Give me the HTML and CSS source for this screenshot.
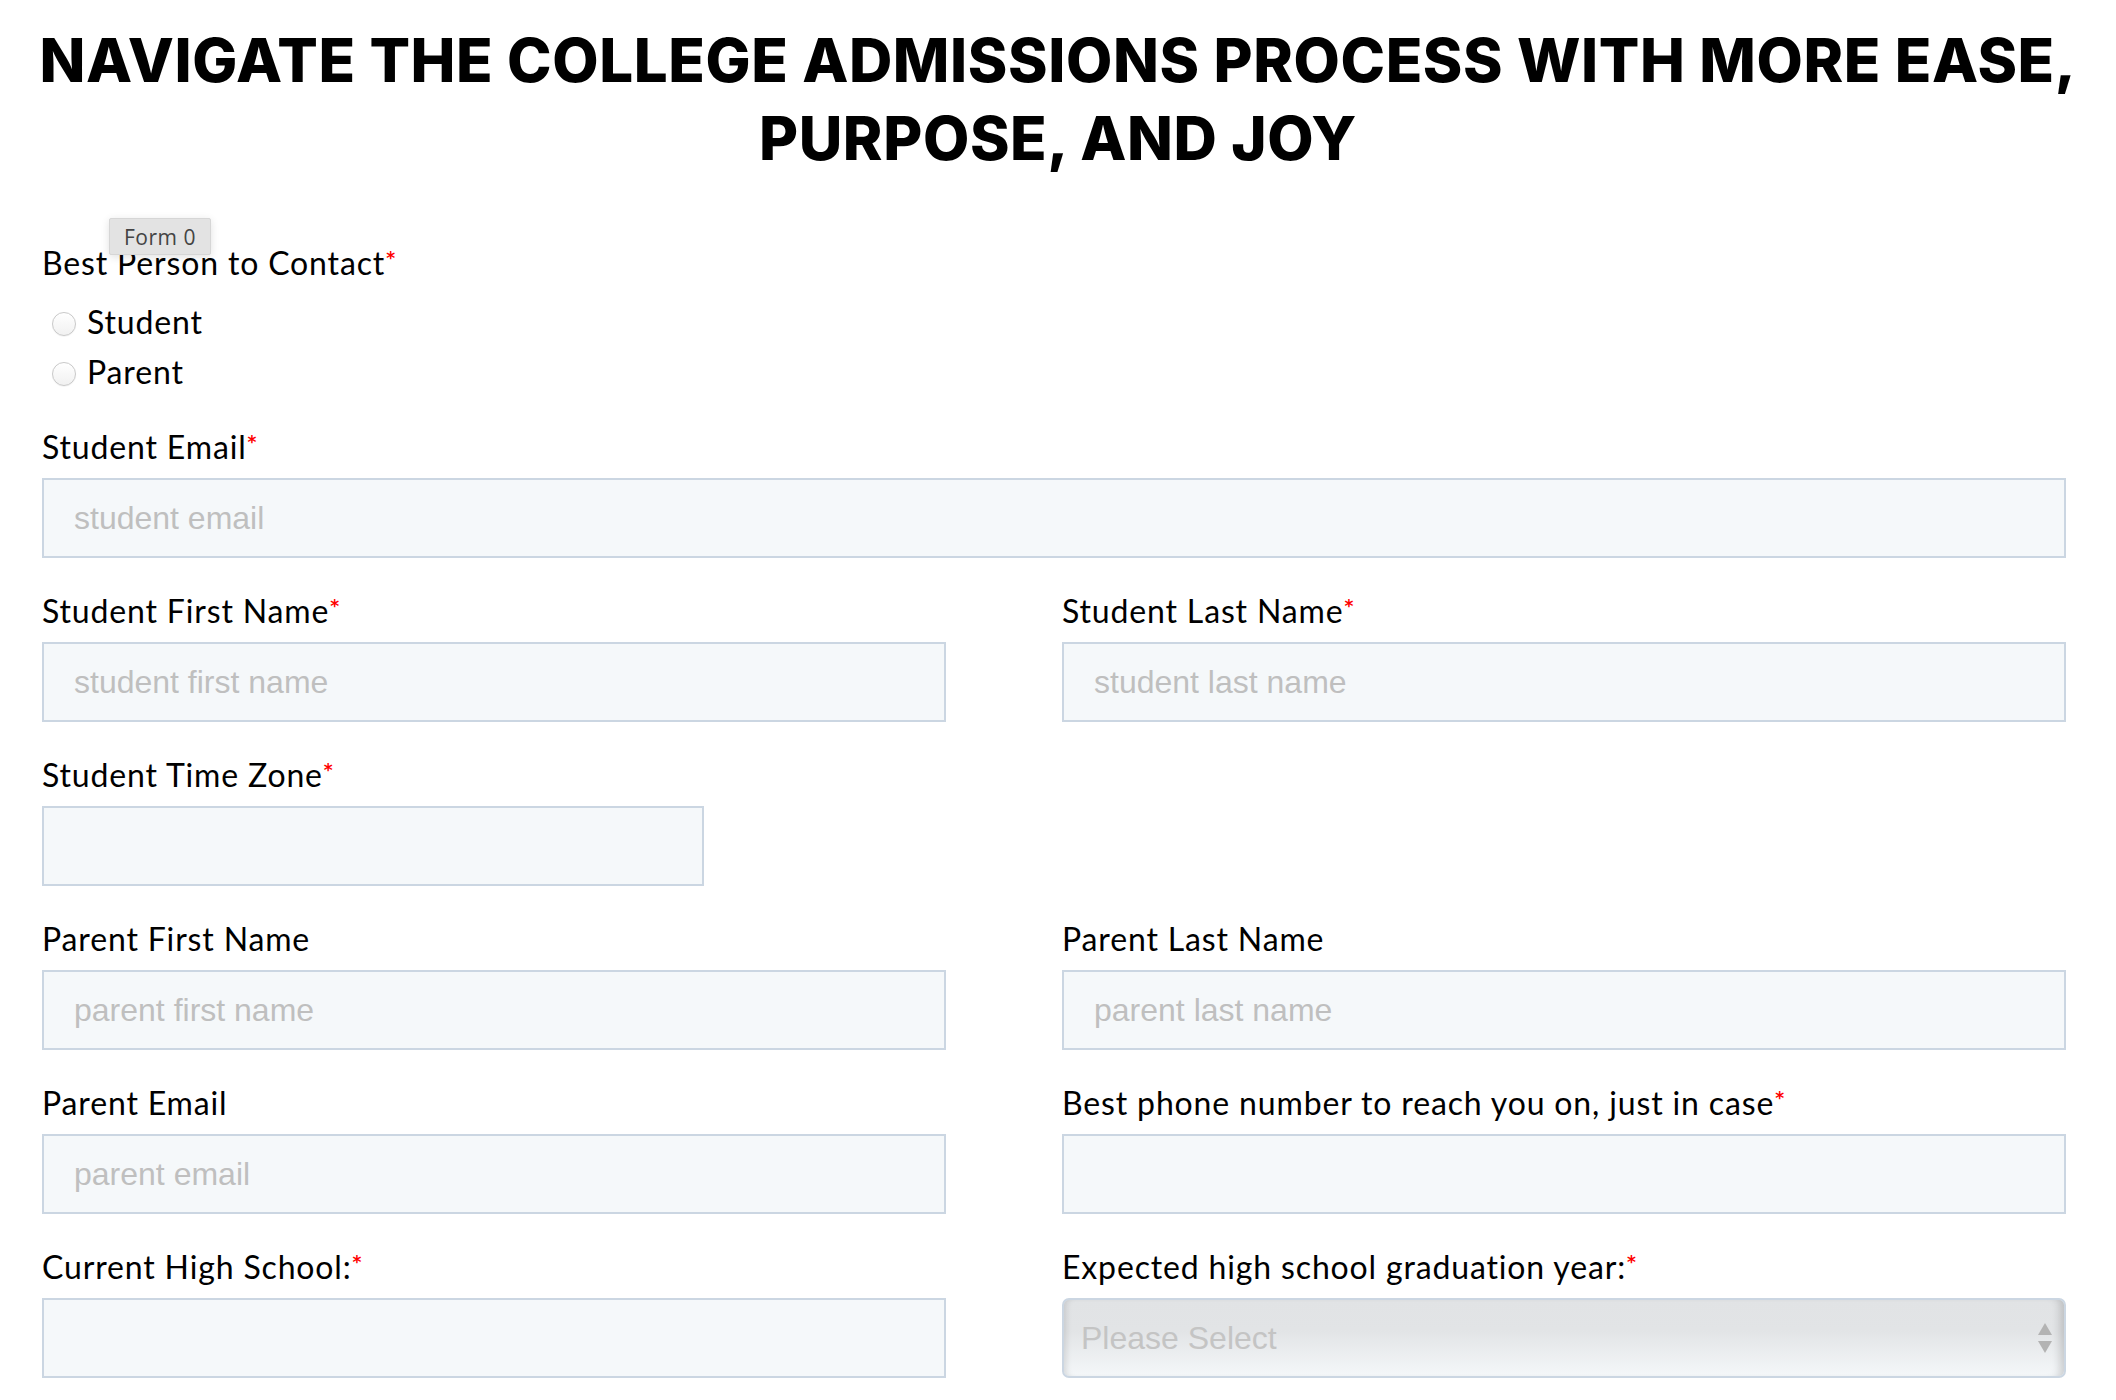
FILE: index.html
```html
<!DOCTYPE html>
<html lang="en">
<head>
<meta charset="utf-8">
<title>Navigate the College Admissions Process</title>
<link rel="stylesheet" href="styles.css">
</head>
<body>
<h1 class="title">NAVIGATE THE COLLEGE ADMISSIONS PROCESS WITH MORE EASE, PURPOSE, AND JOY</h1>
<form class="form">
  <div class="field field-radio">
    <span class="tooltip">Form 0</span>
    <label class="label">Best Person to Contact<span class="req">*</span></label>
    <ul class="radios">
      <li><label class="radio"><input type="radio" name="contact"><span>Student</span></label></li>
      <li><label class="radio"><input type="radio" name="contact"><span>Parent</span></label></li>
    </ul>
  </div>

  <div class="field">
    <label class="label">Student Email<span class="req">*</span></label>
    <input class="input" type="email" placeholder="student email">
  </div>

  <div class="row">
    <div class="field">
      <label class="label">Student First Name<span class="req">*</span></label>
      <input class="input" type="text" placeholder="student first name">
    </div>
    <div class="field">
      <label class="label">Student Last Name<span class="req">*</span></label>
      <input class="input" type="text" placeholder="student last name">
    </div>
  </div>

  <div class="field field-narrow">
    <label class="label">Student Time Zone<span class="req">*</span></label>
    <input class="input" type="text">
  </div>

  <div class="row">
    <div class="field">
      <label class="label">Parent First Name</label>
      <input class="input" type="text" placeholder="parent first name">
    </div>
    <div class="field">
      <label class="label">Parent Last Name</label>
      <input class="input" type="text" placeholder="parent last name">
    </div>
  </div>

  <div class="row">
    <div class="field">
      <label class="label">Parent Email</label>
      <input class="input" type="email" placeholder="parent email">
    </div>
    <div class="field">
      <label class="label">Best phone number to reach you on, just in case<span class="req">*</span></label>
      <input class="input" type="tel">
    </div>
  </div>

  <div class="row">
    <div class="field">
      <label class="label">Current High School:<span class="req">*</span></label>
      <input class="input" type="text">
    </div>
    <div class="field">
      <label class="label">Expected high school graduation year:<span class="req">*</span></label>
      <div class="select-wrap">
        <select class="select">
          <option>Please Select</option>
        </select>
        <svg class="select-arrows" width="14" height="30" viewBox="0 0 14 30" aria-hidden="true">
          <path d="M7 0 L14 12 L0 12 Z" fill="#b3b3b3"/>
          <path d="M0 18 L14 18 L7 30 Z" fill="#b3b3b3"/>
        </svg>
      </div>
    </div>
  </div>
</form>
</body>
</html>
```

FILE: styles.css
```css
* {
  box-sizing: border-box;
}

html, body {
  margin: 0;
  padding: 0;
  background: #ffffff;
}

body {
  font-family: "Lato", "Liberation Sans", sans-serif;
  color: #000000;
}

.title {
  margin: 21px 0 66px;
  padding: 0 8px;
  font-family: "Inter", "Liberation Sans", sans-serif;
  font-weight: 800;
  font-size: 60px;
  line-height: 78px;
  letter-spacing: 0.6px;
  text-align: center;
  color: #000000;
}

.form {
  margin: 0;
  padding: 0 50px 0 42px;
}

.field {
  position: relative;
  margin-bottom: 33px;
}

.field-radio {
  margin-bottom: 30px;
}

.field-narrow {
  width: 662px;
}

.row {
  display: grid;
  grid-template-columns: 904px 1004px;
  column-gap: 116px;
}

.label {
  display: block;
  font-size: 32px;
  line-height: 40px;
  letter-spacing: 0.85px;
  margin-bottom: 11px;
  color: #000000;
}

.field-radio .label {
  margin-bottom: 14px;
}

.req {
  color: #ff0000;
  font-family: "DejaVu Sans", sans-serif;
  font-weight: 700;
  font-size: 17px;
  line-height: 17px;
  letter-spacing: 0;
  vertical-align: top;
  margin-left: 1px;
  position: relative;
  top: 7px;
}

.tooltip {
  position: absolute;
  left: 67px;
  top: -25px;
  z-index: 2;
  width: 102px;
  height: 37px;
  display: flex;
  align-items: center;
  justify-content: center;
  background: #e3e3e3;
  border: 1px solid #d6d6d6;
  border-radius: 2px;
  box-shadow: 0 2px 8px rgba(0, 0, 0, 0.12);
  font-family: "Open Sans", "Liberation Sans", sans-serif;
  font-size: 21px;
  color: #444444;
  letter-spacing: 0.5px;
}

.radios {
  list-style: none;
  margin: 0;
  padding: 0;
}

.radio {
  display: flex;
  align-items: center;
  height: 50px;
  font-size: 32px;
  line-height: 50px;
  letter-spacing: 0.85px;
}

.radio input {
  appearance: none;
  -webkit-appearance: none;
  width: 24px;
  height: 24px;
  margin: 4px 11px 0 10px;
  border-radius: 50%;
  border: 1px solid #c9c9c9;
  background: linear-gradient(#ffffff, #f1f1f1);
  box-shadow: inset 0 1px 1px rgba(255, 255, 255, 0.8), 0 0.5px 1px rgba(0, 0, 0, 0.08);
}

.input {
  display: block;
  width: 100%;
  height: 80px;
  margin: 0;
  padding: 0 30px;
  border: 2px solid #cbd6e2;
  border-radius: 0;
  background: #f5f8fa;
  font-family: "Liberation Sans", Arial, sans-serif;
  font-size: 32px;
  color: #33475b;
  outline: none;
}

.input::placeholder {
  color: #bfbfbf;
  opacity: 1;
}

.select-wrap {
  position: relative;
}

.select {
  display: block;
  width: 100%;
  height: 80px;
  margin: 0;
  padding: 0 17px;
  appearance: none;
  -webkit-appearance: none;
  border: 2px solid #cbd6e2;
  border-radius: 7px;
  background: linear-gradient(#e1e3e5 0%, #e2e4e6 40%, #f4f7f9 100%);
  box-shadow: inset 6px 0 6px -4px rgba(0, 0, 0, 0.12), inset -10px 0 8px -6px rgba(0, 0, 0, 0.16);
  font-family: "Liberation Sans", Arial, sans-serif;
  font-size: 32px;
  color: #c4c4c4;
  outline: none;
}

.select-arrows {
  position: absolute;
  right: 14px;
  top: 25px;
}
```
